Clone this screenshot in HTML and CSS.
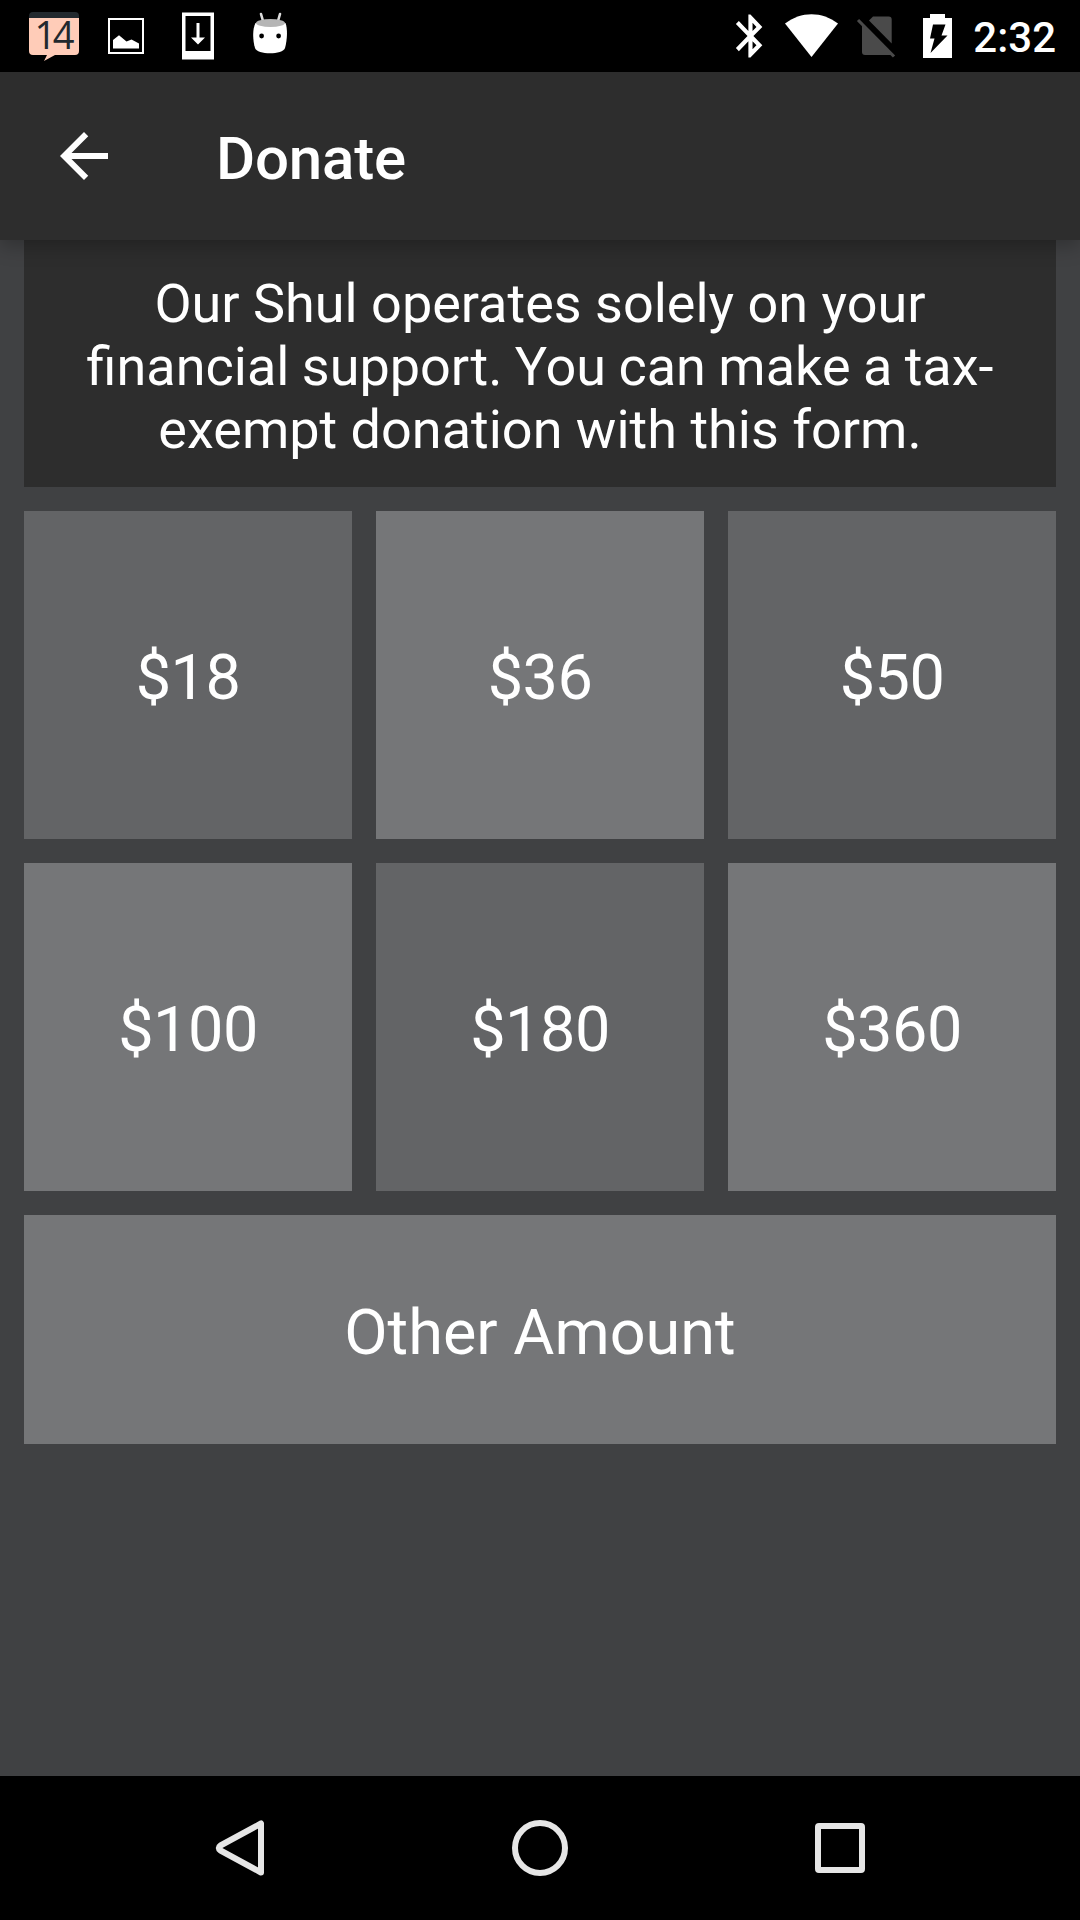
FILE: index.html
```
<!DOCTYPE html>
<html lang="en">
  <head>
    <meta charset="UTF-8" />
    <meta name="viewport" content="width=device-width, initial-scale=1.0" />
    <title>Donate</title>
    <link rel="stylesheet" href="styles.css">
  </head>
  <body>
    <div class="status-bar">
      <div class="status-icons">
        <!-- calendar -->
        <svg width="72" height="72" viewBox="0 0 72 72">
          <path d="M11 18h50v33a4 4 0 0 1-4 4H37L26 61l3-6H15a4 4 0 0 1-4-4z" fill="#ffccb8" />
          <path d="M11 18v-2a4 4 0 0 1 4-4h42a4 4 0 0 1 4 4v2z" fill="#22292e" />
          <text class="calendar-day" x="16.500" y="49">14</text>
        </svg>
        <!-- image -->
        <svg width="72" height="72" viewBox="0 0 72 72">
          <rect x="19" y="19" width="34" height="34" fill="none" stroke="#fff" stroke-width="2" />
          <path d="M23 48.500V40l6-4.800 7.500 6.300 5-2 7.500 4v5z" fill="#fff" />
        </svg>
        <!-- download to device -->
        <svg width="72" height="72" viewBox="0 0 72 72">
          <path d="M20 12.500h32v47H20zM23.500 16v35h25V16z" fill="#fff" fill-rule="evenodd" />
          <path d="M34.500 23h3v14.500H43L36 44.500l-7-7h5.500z" fill="#fff" />
        </svg>
        <!-- marshmallow -->
        <svg width="72" height="72" viewBox="0 0 72 72">
          <path d="M27 14l2 7M46 14l-2 7" stroke="#ddd" stroke-width="2.600" stroke-linecap="round" />
          <path d="M21.500 23C18 30 19 41 21 48c2 7 28 7 30 0 2-7 3-18 .500-25z" fill="#fff" />
          <ellipse cx="36.500" cy="23" rx="14.500" ry="4" fill="#b5b5b5" />
          <circle cx="27.600" cy="36" r="2.400" />
          <circle cx="44.600" cy="36" r="2.400" />
        </svg>
      </div>
      <div class="status-icons">
        <!-- bluetooth -->
        <svg width="60" height="72" viewBox="0 0 60 72">
          <path transform="translate(5.500 10.300) scale(2.080 2.150)" d="M17.710 7.710L12 2h-1v7.590L6.410 5 5 6.410 10.590 12 5 17.590 6.410 19 11 14.410V22h1l5.710-5.710-4.300-4.290 4.300-4.290zM13 5.830l1.880 1.880L13 9.590V5.830zm1.880 10.460L13 18.170v-3.760l1.880 1.880z" fill="#fff" />
        </svg>
        <!-- wifi -->
        <svg width="64" height="72" viewBox="0 0 64 72">
          <path d="M5 23.500C21 11 42 11 58 23.500L31.500 57z" fill="#fff" />
        </svg>
        <!-- no sim -->
        <svg width="64" height="72" viewBox="0 0 64 72">
          <path d="M25 20.500l4-4H44.700a3 3 0 0 1 3 3v24z" fill="#4a4a4a" />
          <path d="M18 23l31 32H21a3 3 0 0 1-3-3z" fill="#4a4a4a" />
          <path d="M14 20l36 36.500" stroke="#4a4a4a" stroke-width="3.200" />
        </svg>
        <!-- battery charging -->
        <svg width="60" height="72" viewBox="0 0 60 72">
          <path d="M22 14h15v4h7v40H15V18h7z" fill="#fff" />
          <path d="M25 24.500h12.500l-4 11h6L22.500 53l4-14.500H22z" fill="#000" />
        </svg>
        <span class="clock">2:32</span>
      </div>
    </div>

    <header class="toolbar">
      <svg class="back-arrow" width="48" height="48" viewBox="0 0 16 16">
        <path d="M16 7H3.830l5.590-5.590L8 0 0 8l8 8 1.410-1.410L3.830 9H16z" fill="#fff" />
      </svg>
      <h1>Donate</h1>
    </header>

    <main class="content">
      <p class="intro">
        <span>Our Shul operates solely on your</span>
        <span class="tight">financial support. You can make a tax-</span>
        <span>exempt donation with this form.</span>
      </p>
      <div class="amounts">
        <button type="button" class="amount dark">$18</button>
        <button type="button" class="amount">$36</button>
        <button type="button" class="amount dark">$50</button>
        <button type="button" class="amount">$100</button>
        <button type="button" class="amount dark">$180</button>
        <button type="button" class="amount">$360</button>
        <button type="button" class="amount other">Other Amount</button>
      </div>
    </main>

    <nav class="nav-bar">
      <svg width="60" height="60" viewBox="0 0 60 60">
        <path d="M51 5.500v49L10.500 32.500q-3.500-2.500 0-5z" />
      </svg>
      <svg width="60" height="60" viewBox="0 0 60 60">
        <circle cx="30" cy="30" r="25" />
      </svg>
      <svg width="60" height="60" viewBox="0 0 60 60">
        <rect x="8" y="8" width="44" height="44" rx="1" />
      </svg>
    </nav>
  </body>
</html>
```
FILE: styles.css
```
* {
  box-sizing: border-box;
}
body {
  font-family: Roboto, sans-serif;
  display: flex;
  flex-direction: column;
  height: 1920px;
  margin: 0;
  background-color: #404143;
  color: white;
}
svg {
  display: block;
  flex: none;
}

.status-bar {
  display: flex;
  justify-content: space-between;
  height: 72px;
  padding: 0 24px 0 18px;
  background-color: #000;
}
.status-icons {
  display: flex;
  align-items: center;
}
.calendar-day {
  font-family: "Open Sans", sans-serif;
  font-size: 38px;
  font-weight: 500;
  letter-spacing: -3.5px;
  fill: #22292e;
}
.clock {
  font-size: 42px;
  font-weight: 500;
  line-height: 70px;
  padding: 4px 0 0 5px;
}

.toolbar {
  display: flex;
  align-items: center;
  position: relative;
  height: 168px;
  padding-left: 60px;
  background-color: #2d2d2d;
  box-shadow: 0 6px 18px rgba(0, 0, 0, 0.25);
}
.toolbar h1 {
  margin: 4px 0 0 108px;
  font-size: 60px;
  font-weight: 500;
  letter-spacing: -0.2px;
}

.content {
  flex: 1;
  padding: 0 24px;
}
.intro {
  height: 247px;
  margin: 0 0 24px;
  padding: 32px 48px 0;
  background-color: #2d2d2d;
  font-size: 54px;
  line-height: 63px;
  text-align: center;
}
.intro span {
  display: block;
}
.intro .tight {
  word-spacing: -1px;
}
.amounts {
  display: grid;
  grid-template-columns: repeat(3, 1fr);
  grid-template-rows: 328px 328px 229px;
  gap: 24px;
}
.amount {
  padding: 4px 0 0;
  border: none;
  background-color: #757678;
  color: white;
  font-family: inherit;
  font-size: 63px;
  letter-spacing: -0.5px;
}
.dark {
  background-color: #636466;
}
.other {
  grid-column: span 3;
  padding-top: 6px;
  letter-spacing: 0;
}

.nav-bar {
  display: flex;
  justify-content: center;
  align-items: center;
  gap: 240px;
  height: 144px;
  background-color: #000;
}
.nav-bar svg {
  fill: none;
  stroke: #e6e6e6;
  stroke-width: 6;
  stroke-linejoin: round;
}
```
